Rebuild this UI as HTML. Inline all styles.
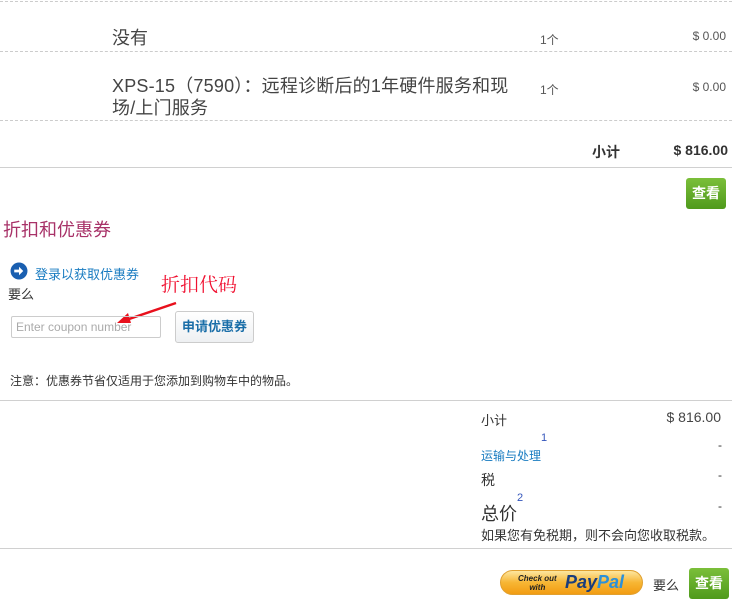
<!DOCTYPE html>
<html><head><meta charset="utf-8"><style>
*{margin:0;padding:0;box-sizing:border-box}
body{width:745px;height:602px;background:#fff;position:relative;overflow:hidden;font-family:"Liberation Sans","Noto Sans CJK SC",sans-serif;color:#333}
.a{position:absolute;white-space:nowrap}
.dash{position:absolute;left:0;width:732px;border-top:1px dashed #ccc}
.sol{position:absolute;left:0;width:732px;border-top:1px solid #d0d0d0}
.btn{position:absolute;background:linear-gradient(#7bbf3a,#4f9a1c);border-radius:3px;color:#fff;font-weight:bold;font-size:14px;text-align:center}
.r{text-align:right}
</style></head><body>
<div class="dash" style="top:1px"></div>
<div class="dash" style="top:51px"></div>
<div class="dash" style="top:120px"></div>
<div class="sol" style="top:167px"></div>

<div class="a" style="left:112px;top:24px;font-size:18px;color:#444">没有</div>
<div class="a" style="left:540px;top:31px;font-size:12px;color:#555">1个</div>
<div class="a r" style="right:19px;top:29px;font-size:12px;color:#555">$ 0.00</div>

<div class="a" style="left:112px;top:75px;font-size:18px;line-height:22px;color:#444;letter-spacing:0.2px">XPS-15（7590）：远程诊断后的1年硬件服务和现<br>场/上门服务</div>
<div class="a" style="left:540px;top:81px;font-size:12px;color:#555">1个</div>
<div class="a r" style="right:19px;top:80px;font-size:12px;color:#555">$ 0.00</div>

<div class="a" style="left:592px;top:142px;font-size:14px;font-weight:bold;color:#333">小计</div>
<div class="a r" style="right:17px;top:142px;font-size:14px;font-weight:bold;color:#333">$ 816.00</div>

<div class="btn" style="left:686px;top:178px;width:40px;height:31px;line-height:31px">查看</div>

<div class="a" style="left:3px;top:216px;font-size:18px;color:#a83268">折扣和优惠券</div>

<svg class="a" style="left:10px;top:262px" width="18" height="18" viewBox="0 0 17 17"><circle cx="8.5" cy="8.5" r="8" fill="#1a5fb0"/><path d="M4 7.2h4.5V4.5l4 4-4 4V9.8H4z" fill="#fff"/></svg>
<div class="a" style="left:35px;top:264px;font-size:13px;color:#1a7cc1">登录以获取优惠券</div>
<div class="a" style="left:8px;top:284px;font-size:13px;color:#333">要么</div>

<div class="a" style="left:161px;top:270px;font-size:19px;color:#f01030;font-family:'Liberation Serif','Noto Serif CJK SC',serif">折扣代码</div>
<svg class="a" style="left:110px;top:298px" width="70" height="30"><line x1="66" y1="5" x2="16" y2="22" stroke="#e8101c" stroke-width="2.5"/><path d="M7 25 L18 15 L21 25z" fill="#e8101c"/></svg>

<div class="a" style="left:11px;top:316px;width:150px;height:22px;border:1px solid #ccc;border-radius:2px;font-size:12px;color:#aaa;line-height:20px;padding-left:4px">Enter coupon number</div>
<div class="a" style="left:175px;top:311px;width:79px;height:32px;border:1px solid #ccc;border-radius:3px;background:linear-gradient(#fff,#eef0f2);font-size:13px;font-weight:bold;color:#1a6ea8;text-align:center;line-height:30px">申请优惠券</div>

<div class="a" style="left:10px;top:372px;font-size:12px;color:#333">注意：优惠券节省仅适用于您添加到购物车中的物品。</div>

<div class="sol" style="top:400px"></div>

<div class="a" style="left:481px;top:410px;font-size:13px">小计</div>
<div class="a r" style="right:24px;top:409px;font-size:14px;color:#444">$ 816.00</div>
<div class="a" style="left:481px;top:447px;font-size:12px;color:#1a7cc1">运输与处理</div>
<div class="a" style="left:541px;top:432px;font-size:11px;color:#3355bb">1</div>
<div class="a r" style="right:23px;top:438px;font-size:12px">-</div>
<div class="a" style="left:481px;top:470px;font-size:14px">税</div>
<div class="a r" style="right:23px;top:468px;font-size:12px">-</div>
<div class="a" style="left:481px;top:500px;font-size:18px">总价</div>
<div class="a" style="left:517px;top:492px;font-size:11px;color:#3355bb">2</div>
<div class="a r" style="right:23px;top:499px;font-size:12px">-</div>
<div class="a" style="left:481px;top:525px;font-size:13px">如果您有免税期，则不会向您收取税款。</div>

<div class="sol" style="top:548px"></div>

<div class="a" style="left:500px;top:570px;width:143px;height:25px;border-radius:13px;background:linear-gradient(#fde6a0,#f7b634 50%,#f29c12);border:1px solid #e0a030">
<div class="a" style="left:17px;top:3px;font-size:8px;line-height:9px;font-weight:bold;color:#222;font-style:italic;text-align:center">Check out<br>with</div>
<div class="a" style="left:64px;top:1px;font-size:18px;font-weight:bold;font-style:italic;color:#1a3d7c">Pay<span style="color:#2b90d9">Pal</span></div>
</div>
<div class="a" style="left:653px;top:575px;font-size:13px">要么</div>
<div class="btn" style="left:689px;top:568px;width:40px;height:31px;line-height:31px">查看</div>
</body></html>
